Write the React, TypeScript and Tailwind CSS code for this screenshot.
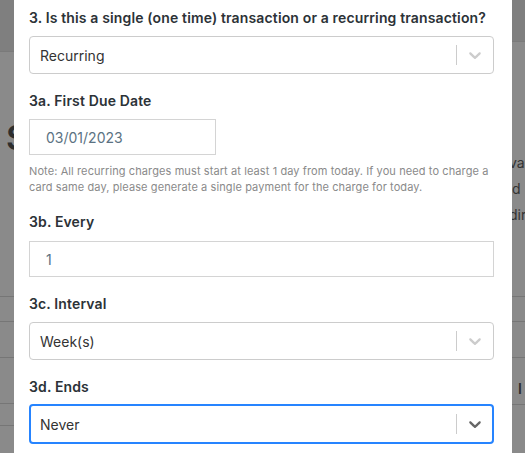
import React from "react";

const Chevron = ({ color }: { color: string }) => (
  <svg width="20" height="20" viewBox="0 0 20 20" fill={color} aria-hidden="true">
    <path d="M4.516 7.548c0.436-0.446 1.043-0.481 1.576 0l3.908 3.747 3.908-3.747c0.533-0.481 1.141-0.446 1.574 0 0.436 0.445 0.408 1.197 0 1.615-0.406 0.418-4.695 4.502-4.695 4.502-0.217 0.223-0.502 0.335-0.787 0.335s-0.57-0.112-0.789-0.335c0 0-4.287-4.084-4.695-4.502s-0.436-1.17 0-1.615z" />
  </svg>
);

const Select = ({ value, focused = false }: { value: string; focused?: boolean }) => (
  <div
    className={
      focused
        ? "flex h-[40px] items-center rounded-[4px] border-2 border-[#2684ff] bg-white"
        : "flex h-[38px] items-center rounded-[4px] border border-[#cccccc] bg-white"
    }
  >
    <div className={focused ? "flex-1 pl-[9px] text-[14px] text-[#333333]" : "flex-1 pl-[10px] text-[14px] text-[#333333]"}>
      {value}
    </div>
    <div className="h-[20px] w-px bg-[#cccccc]" />
    <div className={focused ? "flex w-[35px] items-center justify-center" : "flex w-[36px] items-center justify-center"}>
      <Chevron color={focused ? "#666666" : "#cccccc"} />
    </div>
  </div>
);

const Label = ({ children }: { children: React.ReactNode }) => (
  <div className="h-[20px] whitespace-nowrap text-[14px] font-semibold leading-[20px] tracking-[0.14px] text-[#2c3237]">{children}</div>
);

export default function App() {
  return (
    <div
      className="flex h-[453px] w-[525px] overflow-hidden bg-[#8a8a8a]"
      style={{ fontFamily: "Inter, 'Noto Sans', sans-serif" }}
    >
      {/* left page strip */}
      <div className="flex w-[14px] shrink-0 flex-col overflow-hidden">
        <div className="h-[52px] shrink-0 border-b border-[#7a7a7a] bg-[#7f7f7f]" />
        <div className="h-[66px] shrink-0" />
        <div className="h-[40px] shrink-0 overflow-hidden pl-[6px] text-[34px] font-semibold leading-[40px] text-[#2e2e2e]">S</div>
        <div className="h-[139px] shrink-0 border-b border-[#767676]" />
        <div className="h-[25px] shrink-0 border-b border-[#767676]" />
        <div className="h-[36px] shrink-0 border-b border-[#767676]" />
        <div className="h-[46px] shrink-0 border-b border-[#767676]" />
        <div className="h-[22px] shrink-0 border-b border-[#767676]" />
      </div>

      {/* modal */}
      <div className="flex w-[498px] shrink-0 flex-col bg-white pl-[15px] pr-[18px] pt-[8px]">
        <Label>3. Is this a single (one time) transaction or a recurring transaction?</Label>
        <div className="mt-[8px]">
          <Select value="Recurring" />
        </div>

        <div className="mt-[17px]">
          <Label>3a. First Due Date</Label>
        </div>
        <div className="mt-[8px] flex h-[36px] w-[187px] items-center border border-[#d4d4d4] pl-[16px] text-[14px] text-[#5b7282]">
          03/01/2023
        </div>
        <div className="mt-[8px] text-[11px] leading-[16px] tracking-[0.1px] text-[#8a8a8a]">
          Note: All recurring charges must start at least 1 day from today. If you need to charge a card same day, please generate a single payment for the charge for today.
        </div>

        <div className="mt-[17px]">
          <Label>3b. Every</Label>
        </div>
        <div className="mt-[9px] flex h-[36px] items-center border border-[#d4d4d4] pl-[16px] text-[14px] text-[#5b7282]">
          1
        </div>

        <div className="mt-[17px]">
          <Label>3c. Interval</Label>
        </div>
        <div className="mt-[8px]">
          <Select value="Week(s)" />
        </div>

        <div className="mt-[17px]">
          <Label>3d. Ends</Label>
        </div>
        <div className="mt-[7px]">
          <Select value="Never" focused />
        </div>
      </div>

      {/* right page strip */}
      <div className="flex min-w-0 flex-1 flex-col overflow-hidden">
        <div className="h-[42px] shrink-0 border-b border-[#7a7a7a] bg-[#7f7f7f]" />
        <div className="h-[108px] shrink-0" />
        <div className="flex flex-col whitespace-nowrap text-[14px] leading-[26px] text-[#333333]">
          <div className="-ml-[3px]">va</div>
          <div>d</div>
          <div className="-ml-[3px]">dir</div>
        </div>
        <div className="h-[69px] shrink-0 border-b border-[#767676]" />
        <div className="h-[25px] shrink-0 border-b border-[#767676]" />
        <div className="h-[36px] shrink-0 border-b border-[#767676]" />
        <div className="h-[46px] shrink-0 pl-[6px] pt-[20px] text-[14px] font-semibold text-[#2e2e2e]">I</div>
        <div className="h-[10px] shrink-0 border-t border-[#767676]" />
      </div>
    </div>
  );
}
